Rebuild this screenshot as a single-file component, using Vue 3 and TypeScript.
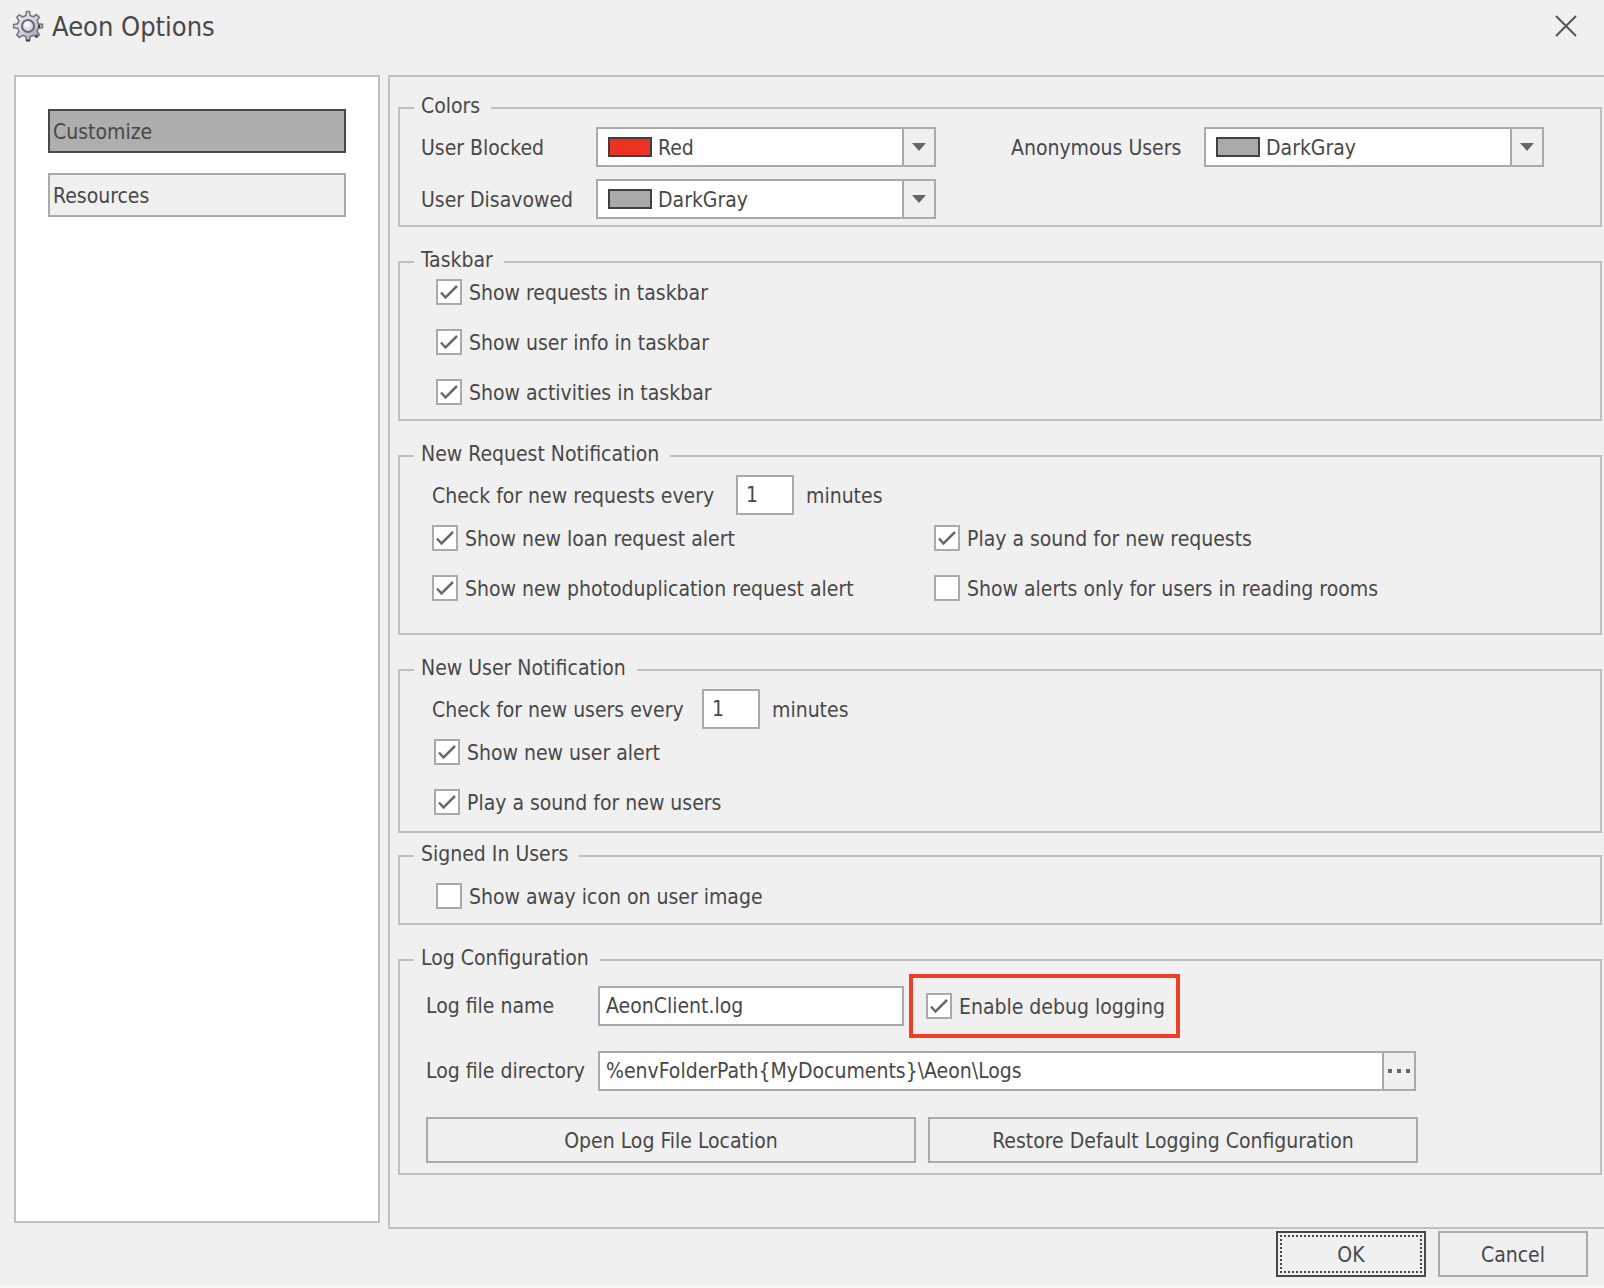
<script setup lang="ts">
import { reactive, ref } from 'vue'

interface CheckOption {
  id: string
  label: string
  checked: boolean
}

interface ColorOption {
  id: string
  label: string
  value: string
}

const swatches: Record<string, string> = {
  Red: '#ea3323',
  DarkGray: '#a9a9a9',
}

const sections = ['Customize', 'Resources']
const active = ref('Customize')

const colors = reactive<ColorOption[]>([
  { id: 'blocked', label: 'User Blocked', value: 'Red' },
  { id: 'anonymous', label: 'Anonymous Users', value: 'DarkGray' },
  { id: 'disavowed', label: 'User Disavowed', value: 'DarkGray' },
])

const taskbar = reactive<CheckOption[]>([
  { id: 'tb-requests', label: 'Show requests in taskbar', checked: true },
  { id: 'tb-user', label: 'Show user info in taskbar', checked: true },
  { id: 'tb-activities', label: 'Show activities in taskbar', checked: true },
])

const requestAlerts = reactive<CheckOption[]>([
  { id: 'rq-loan', label: 'Show new loan request alert', checked: true },
  { id: 'rq-sound', label: 'Play a sound for new requests', checked: true },
  { id: 'rq-photo', label: 'Show new photoduplication request alert', checked: true },
  { id: 'rq-rooms', label: 'Show alerts only for users in reading rooms', checked: false },
])

const userAlerts = reactive<CheckOption[]>([
  { id: 'us-alert', label: 'Show new user alert', checked: true },
  { id: 'us-sound', label: 'Play a sound for new users', checked: true },
])

const signedIn = reactive<CheckOption[]>([
  { id: 'away-icon', label: 'Show away icon on user image', checked: false },
])

const requestMinutes = ref('1')
const userMinutes = ref('1')
const logName = ref('AeonClient.log')
const logDirectory = ref('%envFolderPath{MyDocuments}\\Aeon\\Logs')
const debugLogging = ref(true)
</script>

<template>
  <div class="dialog">
    <header class="titlebar">
      <svg class="gear" viewBox="0 0 32 32" aria-hidden="true">
        <defs>
          <linearGradient id="gear-fill" x1="0" y1="0" x2="1" y2="1">
            <stop offset="0" stop-color="#f4f4fa" />
            <stop offset="0.5" stop-color="#d3d3e6" />
            <stop offset="1" stop-color="#8f8fa8" />
          </linearGradient>
        </defs>
        <path
          d="M14 5.500 14.500 1.500h3L18 5.500l3.300 1.300L24.400 4.500l2.800 2.800-2.100 3.200 1.200 3.200 4.200.6v3.400l-4.200.6-1.200 3.200 2.300 3.300-2.600 2.700-3.400-2.200-3.200 1.300-.6 3.900h-3.200l-.6-3.900-3.200-1.300-3.300 2.200-2.500-2.600 2.200-3.400-1.300-3.200-4-.6v-3.200l4-.6 1.300-3.300-2.200-3.300 2.500-2.500 3.300 2.200z"
          fill="url(#gear-fill)"
          stroke="#77777d"
          stroke-width="1.600"
          stroke-linejoin="round"
        />
        <path d="M14 30.500h4M27 14.500v3.500M25.500 25l-2 1.800" fill="none" stroke="#444449" stroke-width="2" />
        <circle cx="16" cy="16" r="6" fill="#dedeea" stroke="#6c6c74" stroke-width="2.200" />
        <circle cx="15" cy="14.500" r="3" fill="#f2f2f8" />
      </svg>
      <h1>Aeon Options</h1>
      <button class="close" type="button" aria-label="Close">
        <svg viewBox="0 0 22 22" aria-hidden="true">
          <path d="M1 1 21 21M21 1 1 21" fill="none" stroke="#555" stroke-width="2" />
        </svg>
      </button>
    </header>

    <div class="body">
      <nav class="sidebar">
        <button
          v-for="name in sections"
          :key="name"
          type="button"
          class="section"
          :class="{ active: name === active }"
          @click="active = name"
        >
          {{ name }}
        </button>
      </nav>

      <main class="panel">
        <fieldset class="group colors">
          <legend>Colors</legend>
          <div class="color-grid">
            <div v-for="c in colors" :key="c.id" class="color-row">
              <label :for="c.id">{{ c.label }}</label>
              <div class="combo">
                <select :id="c.id" v-model="c.value">
                  <option v-for="(_, name) in swatches" :key="name">{{ name }}</option>
                </select>
                <span class="swatch" :style="{ background: swatches[c.value] }"></span>
                <span class="drop">
                  <svg viewBox="0 0 14 8" aria-hidden="true"><path d="M0 0h14L7 8z" fill="#666" /></svg>
                </span>
              </div>
            </div>
          </div>
        </fieldset>

        <fieldset class="group taskbar">
          <legend>Taskbar</legend>
          <div class="checks">
            <label v-for="o in taskbar" :key="o.id" class="check">
              <span class="box">
                <input :id="o.id" v-model="o.checked" type="checkbox" />
                <svg viewBox="0 0 26 26" aria-hidden="true"><path d="M5 13.500 9.500 18.500 21 7" /></svg>
              </span>
              {{ o.label }}
            </label>
          </div>
        </fieldset>

        <fieldset class="group requests">
          <legend>New Request Notification</legend>
          <div class="interval">
            <label for="request-minutes">Check for new requests every</label>
            <input id="request-minutes" v-model="requestMinutes" class="field minutes" type="text" />
            <span>minutes</span>
          </div>
          <div class="checks pairs">
            <label v-for="o in requestAlerts" :key="o.id" class="check">
              <span class="box">
                <input :id="o.id" v-model="o.checked" type="checkbox" />
                <svg viewBox="0 0 26 26" aria-hidden="true"><path d="M5 13.500 9.500 18.500 21 7" /></svg>
              </span>
              {{ o.label }}
            </label>
          </div>
        </fieldset>

        <fieldset class="group users">
          <legend>New User Notification</legend>
          <div class="interval">
            <label for="user-minutes">Check for new users every</label>
            <input id="user-minutes" v-model="userMinutes" class="field minutes" type="text" />
            <span>minutes</span>
          </div>
          <div class="checks">
            <label v-for="o in userAlerts" :key="o.id" class="check">
              <span class="box">
                <input :id="o.id" v-model="o.checked" type="checkbox" />
                <svg viewBox="0 0 26 26" aria-hidden="true"><path d="M5 13.500 9.500 18.500 21 7" /></svg>
              </span>
              {{ o.label }}
            </label>
          </div>
        </fieldset>

        <fieldset class="group signed">
          <legend>Signed In Users</legend>
          <div class="checks">
            <label v-for="o in signedIn" :key="o.id" class="check">
              <span class="box">
                <input :id="o.id" v-model="o.checked" type="checkbox" />
                <svg viewBox="0 0 26 26" aria-hidden="true"><path d="M5 13.500 9.500 18.500 21 7" /></svg>
              </span>
              {{ o.label }}
            </label>
          </div>
        </fieldset>

        <fieldset class="group log">
          <legend>Log Configuration</legend>
          <div class="log-row">
            <label class="log-label" for="log-name">Log file name</label>
            <input id="log-name" v-model="logName" class="field name" type="text" />
            <div class="highlight">
              <label class="check">
                <span class="box">
                  <input v-model="debugLogging" type="checkbox" />
                  <svg viewBox="0 0 26 26" aria-hidden="true"><path d="M5 13.500 9.500 18.500 21 7" /></svg>
                </span>
                Enable debug logging
              </label>
            </div>
          </div>
          <div class="log-row directory-row">
            <label class="log-label" for="log-directory">Log file directory</label>
            <div class="browse">
              <input id="log-directory" v-model="logDirectory" class="field" type="text" />
              <button class="more" type="button" aria-label="Browse">
                <svg viewBox="0 0 22 4" aria-hidden="true">
                  <path d="M0 0h4v4H0zM9 0h4v4H9zM18 0h4v4h-4z" fill="#666" />
                </svg>
              </button>
            </div>
          </div>
          <div class="log-actions">
            <button class="btn" type="button">Open Log File Location</button>
            <button class="btn" type="button">Restore Default Logging Configuration</button>
          </div>
        </fieldset>
      </main>
    </div>

    <footer class="actions">
      <button class="btn default" type="button"><span>OK</span></button>
      <button class="btn" type="button">Cancel</button>
    </footer>
  </div>
</template>

<style>
body {
  background: #f0f0f0;
}
</style>

<style scoped>
.dialog,
.dialog * {
  box-sizing: border-box;
}

.dialog {
  display: flex;
  flex-direction: column;
  min-height: 100vh;
  overflow: hidden;
  border-bottom: 2px solid #faf6f1;
  background: #f0f0f0;
  color: #484848;
  font: 21px/28px Tahoma, 'DejaVu Sans Condensed', 'Noto Sans', sans-serif;
}

button,
input,
select {
  margin: 0;
  border-radius: 0;
  color: inherit;
  font: inherit;
}

svg {
  display: block;
}

.titlebar {
  display: flex;
  align-items: center;
  height: 75px;
  padding: 0 26px 24px 12px;
}

.gear {
  width: 32px;
  height: 32px;
}

h1 {
  flex: 1;
  margin: 0 0 0 8px;
  padding-top: 2px;
  font-size: 27px;
  font-weight: 400;
  line-height: 32px;
}

.close {
  width: 24px;
  padding: 1px;
  border: 0;
  background: none;
}

.body {
  display: flex;
  flex: 1;
  gap: 8px;
  padding-left: 14px;
}

.sidebar {
  display: flex;
  flex: none;
  flex-direction: column;
  gap: 20px;
  width: 366px;
  margin-bottom: 6px;
  padding: 32px;
  border: 2px solid #c0c0c0;
  background: #fff;
}

.section {
  height: 44px;
  padding: 2px 3px 0;
  border: 2px solid #aaa;
  background: #f0f0f0;
  text-align: left;
}

.section.active {
  border-color: #484848;
  background: #aeaeae;
}

.panel {
  flex: 1;
  min-width: 0;
  padding: 17px 2px 52px 8px;
  border: 2px solid #c0c0c0;
  border-right: 0;
}

.group {
  min-width: 0;
  margin: 0;
  padding: 0;
  border: 2px solid #c0c0c0;
}

legend {
  margin-left: 14px;
  padding: 1px 11px 5px 7px;
  line-height: 22px;
}

.colors {
  padding: 5px 21px 6px;
}

.colors legend {
  margin-left: -7px;
}

.color-grid {
  display: grid;
  grid-template-columns: 515px 533px;
  gap: 12px 75px;
}

.color-row {
  display: flex;
  align-items: center;
  justify-content: space-between;
  white-space: nowrap;
}

.color-row label {
  padding-top: 2px;
}

.combo {
  position: relative;
  width: 340px;
  height: 40px;
}

.combo select {
  width: 100%;
  height: 100%;
  padding: 2px 40px 0 60px;
  border: 2px solid #aaa;
  background: #fff;
  appearance: none;
}

.swatch {
  position: absolute;
  top: 10px;
  left: 12px;
  width: 44px;
  height: 20px;
  border: 2px solid #404040;
  pointer-events: none;
}

.drop {
  position: absolute;
  top: 2px;
  right: 2px;
  bottom: 2px;
  display: grid;
  place-items: center;
  width: 32px;
  border-left: 2px solid #aaa;
  background: #f0f0f0;
  pointer-events: none;
}

.drop svg {
  width: 14px;
  height: 8px;
}

.taskbar {
  margin-top: 21px;
  padding: 3px 0 14px;
}

.requests,
.users,
.log {
  margin-top: 21px;
}

.requests {
  padding: 5px 0 32px;
}

.users {
  padding: 5px 0 16px;
}

.signed {
  margin-top: 9px;
  padding: 13px 0 14px;
}

.checks {
  display: grid;
  gap: 24px;
  padding-left: 36px;
}

.requests .checks {
  padding-left: 32px;
}

.users .checks {
  padding-left: 34px;
}

.checks.pairs {
  grid-template-columns: 478px 1fr;
}

.check {
  display: flex;
  align-items: flex-start;
  gap: 7px;
  height: 26px;
  white-space: nowrap;
}

.box {
  display: grid;
  width: 26px;
  height: 26px;
}

.box input,
.box svg {
  grid-area: 1 / 1;
  width: 26px;
  height: 26px;
}

.box input {
  border: 2px solid #aaa;
  background: #fff;
  appearance: none;
}

.box svg {
  visibility: hidden;
  fill: none;
  stroke: #6a6a6a;
  stroke-width: 2.5;
  pointer-events: none;
}

.box input:checked + svg {
  visibility: visible;
}

.interval {
  display: flex;
  align-items: center;
  gap: 12px;
  margin-bottom: 10px;
  padding-left: 32px;
}

.interval label {
  min-width: 258px;
  padding-top: 2px;
}

.requests .interval label {
  min-width: 292px;
}

.interval span {
  padding-top: 2px;
}

.field {
  height: 40px;
  padding: 0 6px;
  border: 2px solid #aaa;
  background: #fff;
}

.minutes {
  width: 58px;
  padding: 0 8px;
}

.log {
  padding: 0 0 10px 26px;
}

.log legend {
  margin-left: -12px;
}

.log-row {
  display: flex;
  align-items: center;
}

.log-label {
  width: 172px;
  white-space: nowrap;
}

.name {
  width: 306px;
}

.highlight {
  margin-left: 5px;
  padding: 15px 11px 15px 13px;
  border: 4px solid #ee3f26;
}

.directory-row {
  margin-top: 13px;
}

.browse {
  display: flex;
  width: 818px;
}

.browse .field {
  flex: 1;
  min-width: 0;
}

.more {
  display: grid;
  place-items: center;
  width: 32px;
  padding: 0;
  border: 2px solid #aaa;
  border-left: 0;
  background: #f0f0f0;
}

.more svg {
  width: 22px;
  height: 4px;
}

.log-actions {
  display: grid;
  grid-template-columns: 490px 490px;
  gap: 12px;
  margin-top: 26px;
}

.btn {
  height: 46px;
  padding: 2px 0 0;
  border: 2px solid #aaa;
  background: #f0f0f0;
}

.actions {
  display: flex;
  justify-content: flex-end;
  gap: 12px;
  padding: 2px 16px 9px;
}

.actions .btn {
  width: 150px;
}

.actions .default {
  padding: 2px;
  border-color: #484848;
}

.default span {
  display: grid;
  place-items: center;
  height: 100%;
  padding-top: 2px;
  border: 2px dotted #484848;
}
</style>
